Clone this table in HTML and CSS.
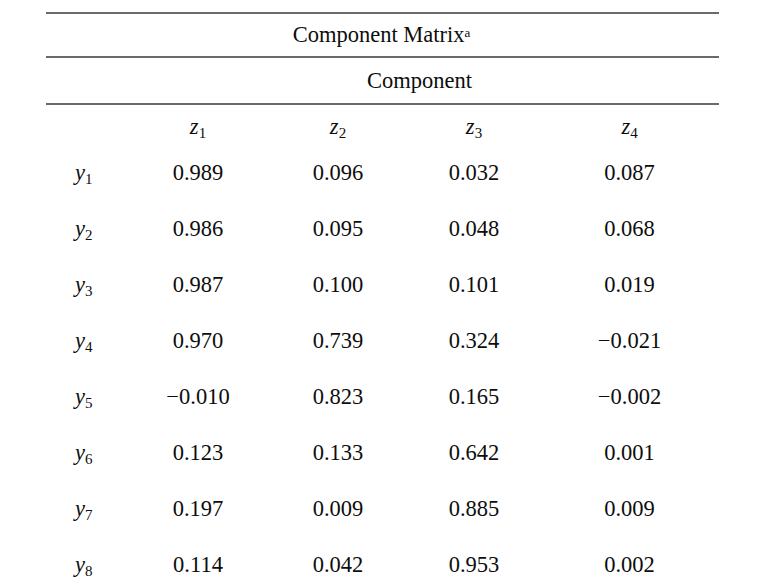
FILE: index.html
```html
<!DOCTYPE html>
<html lang="en">
<head>
<meta charset="utf-8">
<title>Component Matrix</title>
<link rel="stylesheet" href="styles.css">
</head>
<body>
<div class="page">
<table class="matrix">
  <colgroup>
    <col class="c-label">
    <col class="c1">
    <col class="c2">
    <col class="c3">
    <col class="c4">
  </colgroup>
  <thead>
    <tr class="title-row">
      <th colspan="5">Component Matrix<sup>a</sup></th>
    </tr>
    <tr class="group-row">
      <th></th>
      <th colspan="4">Component</th>
    </tr>
    <tr class="var-row">
      <th></th>
      <th><i>z</i><sub>1</sub></th>
      <th><i>z</i><sub>2</sub></th>
      <th><i>z</i><sub>3</sub></th>
      <th><i>z</i><sub>4</sub></th>
    </tr>
  </thead>
  <tbody>
    <tr><th><i>y</i><sub>1</sub></th><td>0.989</td><td>0.096</td><td>0.032</td><td>0.087</td></tr>
    <tr><th><i>y</i><sub>2</sub></th><td>0.986</td><td>0.095</td><td>0.048</td><td>0.068</td></tr>
    <tr><th><i>y</i><sub>3</sub></th><td>0.987</td><td>0.100</td><td>0.101</td><td>0.019</td></tr>
    <tr><th><i>y</i><sub>4</sub></th><td>0.970</td><td>0.739</td><td>0.324</td><td>&minus;0.021</td></tr>
    <tr><th><i>y</i><sub>5</sub></th><td>&minus;0.010</td><td>0.823</td><td>0.165</td><td>&minus;0.002</td></tr>
    <tr><th><i>y</i><sub>6</sub></th><td>0.123</td><td>0.133</td><td>0.642</td><td>0.001</td></tr>
    <tr><th><i>y</i><sub>7</sub></th><td>0.197</td><td>0.009</td><td>0.885</td><td>0.009</td></tr>
    <tr><th><i>y</i><sub>8</sub></th><td>0.114</td><td>0.042</td><td>0.953</td><td>0.002</td></tr>
  </tbody>
</table>
</div>
</body>
</html>
```
FILE: styles.css
```css
html, body {
  margin: 0;
  padding: 0;
  background: #ffffff;
}

.page {
  padding: 12px 0 0 46px;
}

.matrix {
  border-collapse: collapse;
  table-layout: fixed;
  width: 673px;
  font-family: "Liberation Serif", "Times New Roman", serif;
  font-size: 22.5px;
  color: #0d0d0d;
}

.c-label { width: 82px; }
.c1 { width: 140px; }
.c2 { width: 140px; }
.c3 { width: 132px; }
.c4 { width: 179px; }

.matrix th,
.matrix td {
  padding: 0;
  font-weight: normal;
  text-align: center;
  white-space: nowrap;
}

.title-row {
  border-top: 2px solid #6a6a6a;
  border-bottom: 2px solid #6a6a6a;
}

.title-row th {
  height: 42px;
  line-height: 42px;
  padding-right: 2px;
}

.group-row {
  border-bottom: 2px solid #6a6a6a;
}

.group-row th {
  height: 45px;
  line-height: 45px;
  padding-right: 8px;
}

.var-row th {
  height: 36px;
  line-height: 36px;
  padding-top: 4px;
}

.matrix tbody th,
.matrix tbody td {
  height: 56px;
  line-height: 56px;
}

.matrix tbody th {
  text-align: left;
  padding-left: 29px;
}

.matrix i {
  font-style: italic;
}

.matrix sub {
  font-size: 15px;
  line-height: 0;
  vertical-align: -4px;
}

.matrix sup {
  font-size: 13px;
  line-height: 0;
  vertical-align: 5px;
}
```
